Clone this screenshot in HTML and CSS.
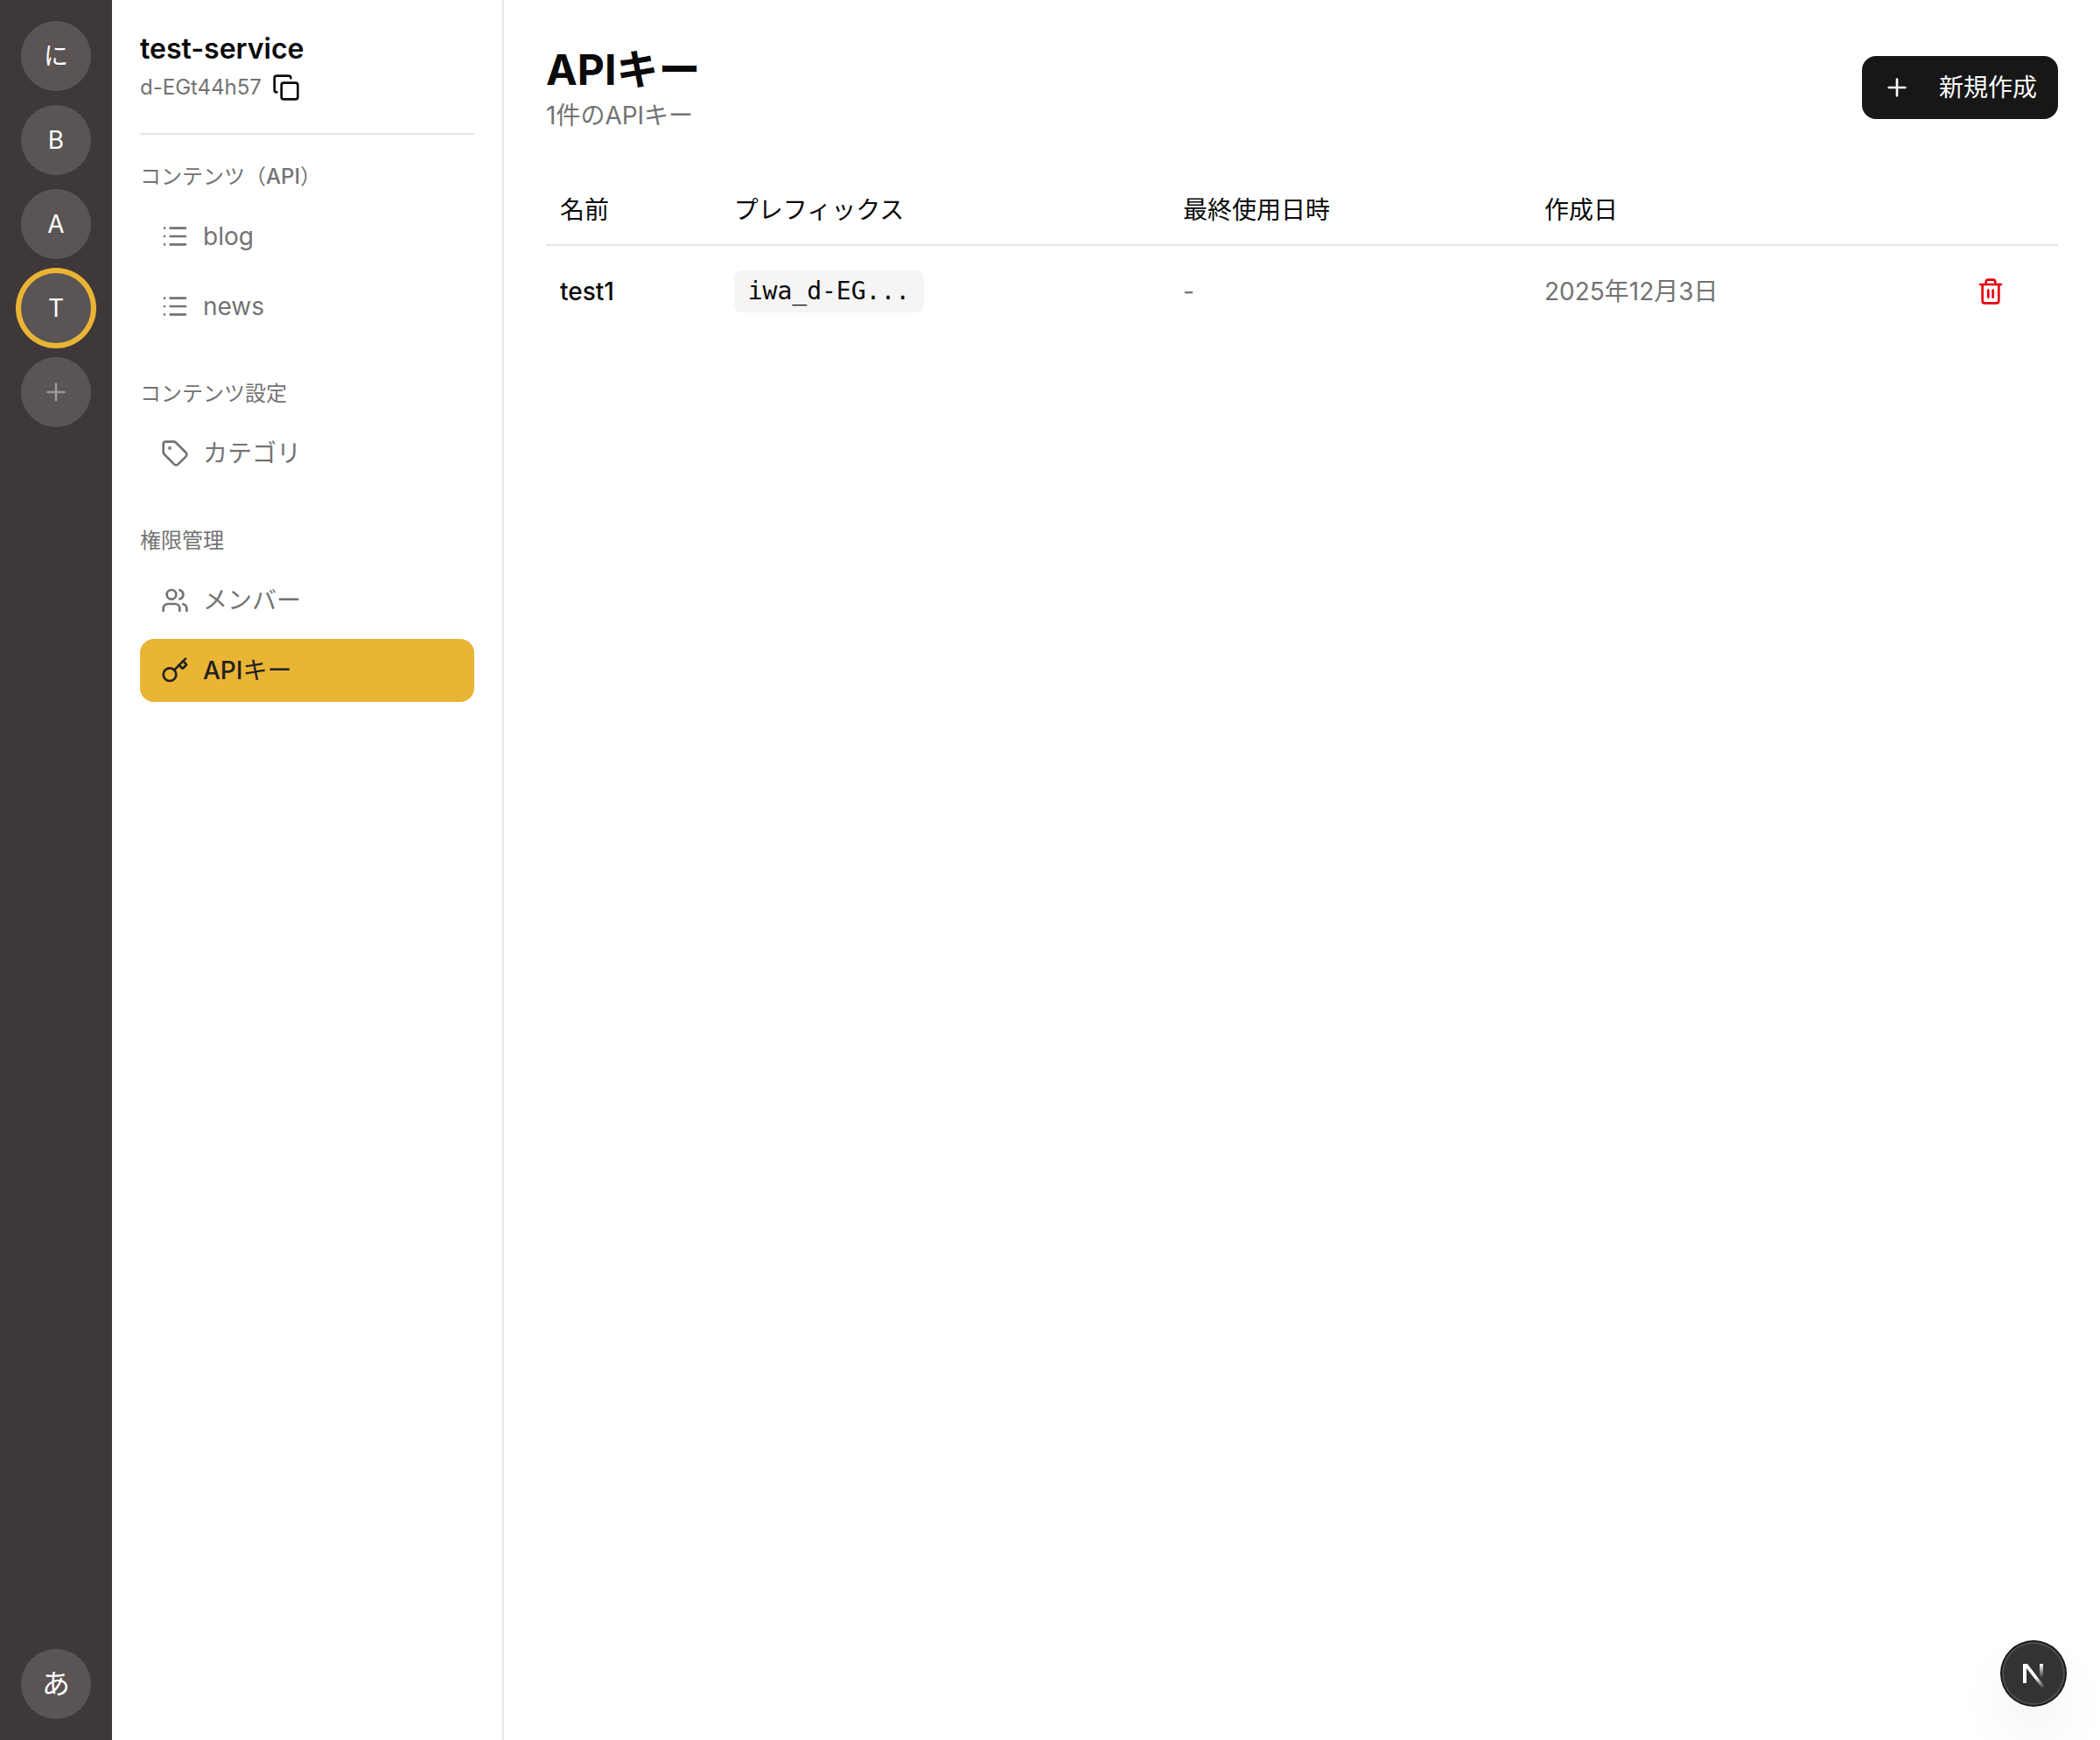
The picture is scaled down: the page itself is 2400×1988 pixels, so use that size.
FILE: index.html
```html
<!DOCTYPE html>
<html lang="ja">
<head>
  <meta charset="UTF-8">
  <meta name="viewport" content="width=device-width, initial-scale=1.0">
  <title>APIキー</title>
  <link rel="stylesheet" href="styles.css">
</head>
<body>
  <div class="rail">
    <a class="avatar" href="#">に</a>
    <a class="avatar" href="#">B</a>
    <a class="avatar" href="#">A</a>
    <a class="avatar active" href="#">T</a>
    <button class="avatar add" type="button" aria-label="サービスを追加">
      <svg class="icon" viewBox="0 0 24 24"><path d="M5 12h14M12 5v14"/></svg>
    </button>
    <button class="avatar user" type="button">あ</button>
  </div>

  <aside class="sidebar">
    <div class="service">
      <div class="service-name">test-service</div>
      <div class="service-id">
        <span>d-EGt44h57</span>
        <button class="copy" type="button" aria-label="コピー">
          <svg class="icon" viewBox="0 0 24 24"><rect width="14" height="14" x="8" y="8" rx="2" ry="2"/><path d="M4 16c-1.1 0-2-.9-2-2V4c0-1.1.9-2 2-2h10c1.1 0 2 .9 2 2"/></svg>
        </button>
      </div>
    </div>

    <nav class="menu">
      <div class="group">
        <h2>コンテンツ（<span class="latin">API</span>）</h2>
        <a href="#">
          <svg class="icon" viewBox="0 0 24 24"><path d="M3 5h.01M3 12h.01M3 19h.01M8 5h13M8 12h13M8 19h13"/></svg>
          blog
        </a>
        <a href="#">
          <svg class="icon" viewBox="0 0 24 24"><path d="M3 5h.01M3 12h.01M3 19h.01M8 5h13M8 12h13M8 19h13"/></svg>
          news
        </a>
      </div>
      <div class="group">
        <h2>コンテンツ設定</h2>
        <a href="#">
          <svg class="icon" viewBox="0 0 24 24"><path d="M12.586 2.586A2 2 0 0 0 11.172 2H4a2 2 0 0 0-2 2v7.172a2 2 0 0 0 .586 1.414l8.704 8.704a2.426 2.426 0 0 0 3.42 0l6.58-6.58a2.426 2.426 0 0 0 0-3.42z"/><circle cx="7.5" cy="7.5" r=".5" fill="currentColor"/></svg>
          カテゴリ
        </a>
      </div>
      <div class="group">
        <h2>権限管理</h2>
        <a href="#">
          <svg class="icon" viewBox="0 0 24 24"><path d="M16 21v-2a4 4 0 0 0-4-4H6a4 4 0 0 0-4 4v2"/><path d="M16 3.128a4 4 0 0 1 0 7.744"/><path d="M22 21v-2a4 4 0 0 0-3-3.87"/><circle cx="9" cy="7" r="4"/></svg>
          メンバー
        </a>
        <a class="current" href="#">
          <svg class="icon" viewBox="0 0 24 24"><path d="m15.5 7.5 2.3 2.3a1 1 0 0 0 1.4 0l2.1-2.1a1 1 0 0 0 0-1.4L19 4"/><path d="m21 2-9.6 9.6"/><circle cx="7.5" cy="15.5" r="5.5"/></svg>
          <span><span class="latin">API</span>キー</span>
        </a>
      </div>
    </nav>
  </aside>

  <main>
    <header>
      <div>
        <h1>APIキー</h1>
        <p>1件のAPIキー</p>
      </div>
      <button class="create" type="button">
        <svg class="icon" viewBox="0 0 24 24"><path d="M5 12h14M12 5v14"/></svg>
        新規作成
      </button>
    </header>

    <table>
      <thead>
        <tr>
          <th class="col-name">名前</th>
          <th class="col-prefix">プレフィックス</th>
          <th class="col-used">最終使用日時</th>
          <th class="col-created">作成日</th>
          <th></th>
        </tr>
      </thead>
      <tbody>
        <tr>
          <td class="name">test1</td>
          <td><code>iwa_d-EG...</code></td>
          <td class="muted">-</td>
          <td class="muted">2025年12月3日</td>
          <td>
            <button class="delete" type="button" aria-label="削除">
              <svg class="icon" viewBox="0 0 24 24"><path d="M10 11v6M14 11v6"/><path d="M19 6v14a2 2 0 0 1-2 2H7a2 2 0 0 1-2-2V6"/><path d="M3 6h18"/><path d="M8 6V4a2 2 0 0 1 2-2h4a2 2 0 0 1 2 2v2"/></svg>
            </button>
          </td>
        </tr>
      </tbody>
    </table>
  </main>

  <button class="dev-badge" type="button" aria-label="Next.js">
    <svg viewBox="0 0 72 72">
      <defs>
        <linearGradient id="diagonal" gradientUnits="userSpaceOnUse" x1="38" y1="41" x2="47" y2="53">
          <stop offset="0" stop-color="#fff"/>
          <stop offset="1" stop-color="#fff" stop-opacity="0"/>
        </linearGradient>
        <linearGradient id="stem" gradientUnits="userSpaceOnUse" x1="45" y1="25" x2="45" y2="41">
          <stop offset="0" stop-color="#fff"/>
          <stop offset="1" stop-color="#fff" stop-opacity="0"/>
        </linearGradient>
      </defs>
      <path d="M24 25h5L49 51l-3 2L28 30v17h-4z" fill="url(#diagonal)"/>
      <path d="M43 25h4v19h-4z" fill="url(#stem)"/>
    </svg>
  </button>
</body>
</html>
```
FILE: styles.css
```css
* {
  box-sizing: border-box;
}
body {
  margin: 0;
  display: flex;
  min-height: 100vh;
  font-family: Inter, "Noto Sans CJK JP", sans-serif;
  font-size: 28px;
  line-height: 40px;
  color: #0a0a0a;
  background-color: #fff;
}
h1, h2, p {
  margin: 0;
}
a {
  color: inherit;
  text-decoration: none;
}
button {
  font: inherit;
  color: inherit;
  border: none;
  background: none;
  padding: 0;
  cursor: pointer;
}
.icon {
  display: block;
  flex-shrink: 0;
  width: 32px;
  height: 32px;
  fill: none;
  stroke: currentColor;
  stroke-width: 2;
  stroke-linecap: round;
  stroke-linejoin: round;
}
.latin {
  font-weight: 500;
}

/* service switcher */
.rail {
  flex-shrink: 0;
  width: 128px;
  padding: 24px 0;
  display: flex;
  flex-direction: column;
  align-items: center;
  gap: 16px;
  background-color: #3e3839;
}
.avatar {
  width: 80px;
  height: 80px;
  display: flex;
  justify-content: center;
  align-items: center;
  border-radius: 50%;
  background-color: #5a5455;
  color: #fff;
}
.avatar.active {
  box-shadow: 0 0 0 6px #eab434;
}
.avatar.add {
  color: #999;
}
.avatar.user {
  margin-top: auto;
  font-size: 32px;
}

/* sidebar */
.sidebar {
  flex-shrink: 0;
  width: 448px;
  padding: 32px;
  border-right: 2px solid #e5e5e5;
}
.service {
  padding-bottom: 32px;
  border-bottom: 2px solid #e5e5e5;
}
.service-name {
  font-size: 32px;
  line-height: 48px;
  font-weight: 600;
}
.service-id {
  display: flex;
  align-items: center;
  gap: 8px;
  font-size: 24px;
  color: #737373;
}
.copy {
  padding: 4px;
  color: #0a0a0a;
}
.menu {
  margin-top: 32px;
  display: flex;
  flex-direction: column;
  gap: 48px;
  color: #737373;
}
.group {
  display: flex;
  flex-direction: column;
  gap: 8px;
}
.group h2 {
  margin-bottom: 8px;
  font-size: 24px;
  line-height: 32px;
  font-weight: 400;
}
.group a {
  display: flex;
  align-items: center;
  gap: 16px;
  padding: 16px 24px;
  border-radius: 16px;
}
.group a.current {
  background-color: #eab434;
  color: #222;
}

/* content */
main {
  flex: 1;
  min-width: 0;
  padding: 48px;
}
header {
  display: flex;
  justify-content: space-between;
  align-items: center;
  margin-bottom: 48px;
}
h1 {
  font-size: 48px;
  line-height: 64px;
  font-weight: 700;
}
header p {
  color: #737373;
}
.create {
  display: flex;
  align-items: center;
  gap: 32px;
  padding: 16px 24px;
  border-radius: 16px;
  background-color: #171717;
  color: #fafafa;
}
table {
  width: 100%;
  table-layout: fixed;
  border-collapse: collapse;
}
th {
  height: 80px;
  padding: 0 16px;
  text-align: left;
  font-weight: 400;
}
thead tr {
  border-bottom: 2px solid #e5e5e5;
}
td {
  padding: 16px;
}
.col-name {
  width: 11.5%;
}
.col-prefix {
  width: 29.7%;
}
.col-used {
  width: 23.9%;
}
.col-created {
  width: 27.2%;
}
.name {
  font-weight: 500;
}
.muted {
  color: #737373;
}
code {
  display: inline-block;
  padding: 4px 16px;
  border-radius: 8px;
  background-color: #f5f5f5;
  font-family: "DejaVu Sans Mono", monospace;
  font-size: 28px;
}
.delete {
  display: block;
  padding: 20px 24px;
  color: #e7000b;
}

.dev-badge {
  position: fixed;
  right: 40px;
  bottom: 40px;
  width: 72px;
  height: 72px;
  border-radius: 50%;
  background-color: #333;
  box-shadow: 0 0 0 2px #171717, inset 0 0 0 2px #4d4d4d, 0 32px 64px rgba(0, 0, 0, 0.06);
}
.dev-badge svg {
  display: block;
}
```
